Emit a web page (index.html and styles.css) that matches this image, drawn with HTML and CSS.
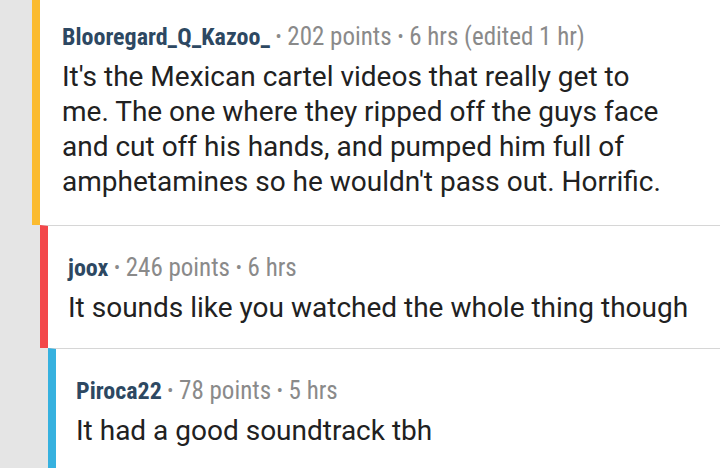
FILE: index.html
```html
<!DOCTYPE html>
<html>
<head>
<meta charset="utf-8">
<link rel="stylesheet" href="styles.css">
</head>
<body>
<div class="thread">
  <div class="comment depth-0 first">
    <div class="meta"><span class="user">Blooregard_Q_Kazoo_</span> <span class="info"><span class="sep">•</span> 202 points <span class="sep">•</span> 6 hrs (edited 1 hr)</span></div>
    <div class="body">It's the Mexican cartel videos that really get to<br>me. The one where they ripped off the guys face<br>and cut off his hands, and pumped him full of<br>amphetamines so he wouldn't pass out. Horrific.</div>
  </div>
  <div class="comment depth-1">
    <div class="meta"><span class="user">joox</span> <span class="info"><span class="sep">•</span> 246 points <span class="sep">•</span> 6 hrs</span></div>
    <div class="body">It sounds like you watched the whole thing though</div>
  </div>
  <div class="comment depth-2">
    <div class="meta"><span class="user">Piroca22</span> <span class="info"><span class="sep">•</span> 78 points <span class="sep">•</span> 5 hrs</span></div>
    <div class="body">It had a good soundtrack tbh</div>
  </div>
</div>
</body>
</html>
```
FILE: styles.css
```css
html, body {
  margin: 0;
  padding: 0;
  background: #e5e5e5;
  height: 100%;
}
.thread {
  display: flex;
  flex-direction: column;
  height: 100%;
}
.comment {
  background: #fff;
  border-left: 8px solid;
  border-top: 1px solid #d6d6d6;
  padding: 27px 10px 23px 22px;
  white-space: nowrap;
}
.comment.first {
  border-top: none;
  padding-top: 22px;
  padding-bottom: 26px;
}
.depth-0 { margin-left: 32px; border-left-color: #fbbb30; }
.depth-1 { margin-left: 40px; border-left-color: #f3474a; padding-left: 20px; }
.depth-2 { margin-left: 48px; border-left-color: #36b1df; padding-left: 20px; flex: 1; }
.meta {
  font-family: "Roboto Condensed", Roboto, sans-serif;
  font-size: 24px;
  line-height: 30px;
  color: #8a8a8a;
}
.user {
  color: #2d4862;
  font-weight: 700;
}
.info {
  font-size: 25px;
}
.sep {
  font-size: 18px;
  vertical-align: 2px;
}
.body {
  font-family: Roboto, "Liberation Sans", sans-serif;
  font-size: 28px;
  line-height: 35px;
  color: #212121;
  margin-top: 7px;
}
```
